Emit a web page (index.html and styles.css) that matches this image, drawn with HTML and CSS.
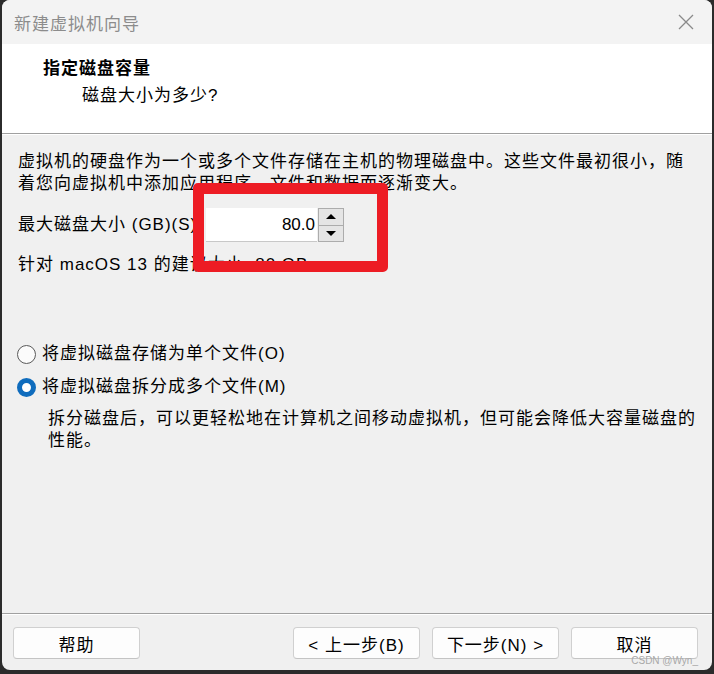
FILE: index.html
```html
<!DOCTYPE html>
<html lang="zh-CN">
<head>
<meta charset="utf-8">
<title>新建虚拟机向导</title>
<link rel="stylesheet" href="styles.css">
</head>
<body>
<div class="window">
  <div class="titlebar">
    <span class="title">新建虚拟机向导</span>
    <svg class="close" width="16" height="16" viewBox="0 0 16 16"><path d="M1 1L15 15M15 1L1 15" stroke="#8a8a8a" stroke-width="1.3" fill="none"/></svg>
  </div>
  <div class="header">
    <div class="h-title">指定磁盘容量</div>
    <div class="h-sub">磁盘大小为多少?</div>
  </div>
  <div class="content">
    <p class="para">虚拟机的硬盘作为一个或多个文件存储在主机的物理磁盘中。这些文件最初很小，随<br>着您向虚拟机中添加应用程序、文件和数据而逐渐变大。</p>
    <div class="size-row">
      <span class="label">最大磁盘大小 (GB)(S)</span>
      <div class="spin">
        <div class="spin-input">80.0</div>
        <div class="spin-btns">
          <div class="spin-btn"><span class="tri up"></span></div>
          <div class="spin-btn"><span class="tri down"></span></div>
        </div>
      </div>
    </div>
    <p class="hint">针对 macOS 13 的建议大小: 80 GB</p>
    <div class="radio-row first">
      <span class="radio"></span>
      <span>将虚拟磁盘存储为单个文件(O)</span>
    </div>
    <div class="radio-row">
      <span class="radio checked"></span>
      <span>将虚拟磁盘拆分成多个文件(M)</span>
    </div>
    <p class="desc">拆分磁盘后，可以更轻松地在计算机之间移动虚拟机，但可能会降低大容量磁盘的<br>性能。</p>
  </div>
  <div class="footer">
    <button class="btn">帮助</button>
    <div class="spacer"></div>
    <button class="btn">&lt; 上一步(B)</button>
    <button class="btn">下一步(N) &gt;</button>
    <button class="btn">取消</button>
  </div>
  <div class="highlight"></div>
  <div class="watermark">CSDN @Wyn_</div>
</div>
</body>
</html>
```

FILE: styles.css
```css
* { box-sizing: border-box; }
html, body { margin: 0; padding: 0; }
body {
  background: #2b2b2b;
  width: 714px;
  height: 674px;
  overflow: hidden;
  font-family: "Liberation Sans", "Noto Sans CJK SC", sans-serif;
  font-size: 17px;
  letter-spacing: 1px;
  color: #000;
}
.window {
  position: relative;
  margin: 0 2px;
  height: 670px;
  background: #f0f0f0;
  border-radius: 8px;
  overflow: hidden;
  display: flex;
  flex-direction: column;
}
.titlebar {
  height: 44px;
  background: #f3f3f3;
  display: flex;
  align-items: center;
  justify-content: space-between;
  padding: 0 18px 0 12px;
}
.title { color: #8c8c8c; font-size: 17px; }
.close { display: block; }
.header {
  height: 90px;
  background: #fff;
  border-bottom: 1px solid #a0a0a0;
  box-shadow: 0 1px 0 #fff;
  padding: 14px 0 0 41px;
  line-height: 22px;
}
.h-title { font-weight: bold; }
.h-sub { margin: 5px 0 0 39px; }
.content {
  flex: 1;
  padding: 17px 0 0 16px;
  line-height: 22px;
}
.para { margin: 0; }
.size-row {
  margin-top: 13px;
  display: flex;
  align-items: center;
}
.label { width: 188px; }
.spin { display: flex; height: 34px; }
.spin-input {
  width: 111px;
  background: #fff;
  border-bottom: 1px solid #c8c8c8;
  text-align: right;
  padding-right: 2px;
  line-height: 33px;
  letter-spacing: 0;
  font-size: 17px;
}
.spin-btns {
  width: 26px;
  margin-left: 1px;
  display: flex;
  flex-direction: column;
}
.spin-btn {
  flex: 1;
  background: #e5e5e5;
  border: 1px solid #acacac;
  display: flex;
  align-items: center;
  justify-content: center;
}
.spin-btn + .spin-btn { border-top: none; }
.tri { width: 0; height: 0; border-left: 5px solid transparent; border-right: 5px solid transparent; }
.tri.up { border-bottom: 5px solid #000; }
.tri.down { border-top: 5px solid #000; }
.hint { margin: 12px 0 0; }
.radio-row {
  display: flex;
  align-items: center;
  height: 22px;
  margin-top: 11px;
}
.radio-row.first { margin-top: 67px; }
.radio {
  width: 19px;
  height: 19px;
  border-radius: 50%;
  border: 1px solid #5a5a5a;
  background: #fbfbfb;
  margin: 0 6px 0 -1px;
  flex: none;
}
.radio.checked {
  background: #fff;
  border: 5px solid #0f6cbd;
}
.desc { margin: 10px 0 0 30px; }
.footer {
  height: 57px;
  border-top: 1px solid #a0a0a0;
  box-shadow: inset 0 1px 0 #fff;
  display: flex;
  align-items: flex-start;
  padding: 13px 14px 0 11px;
  gap: 12px;
}
.spacer { flex: 1; }
.btn {
  width: 127px;
  height: 32px;
  background: #fdfdfd;
  border: 1px solid #d0d0d0;
  border-bottom-color: #c4c4c4;
  border-radius: 4px;
  font-family: inherit;
  font-size: 17px;
  letter-spacing: 1px;
  color: #000;
  padding: 0;
}
.highlight {
  position: absolute;
  left: 191px;
  top: 183px;
  width: 195px;
  height: 89px;
  border: 11px solid #ed1c24;
  border-radius: 5px;
}
.watermark {
  position: absolute;
  right: 14px;
  bottom: 4px;
  font-size: 10px;
  letter-spacing: 0;
  color: #a8a8a8;
}
```
